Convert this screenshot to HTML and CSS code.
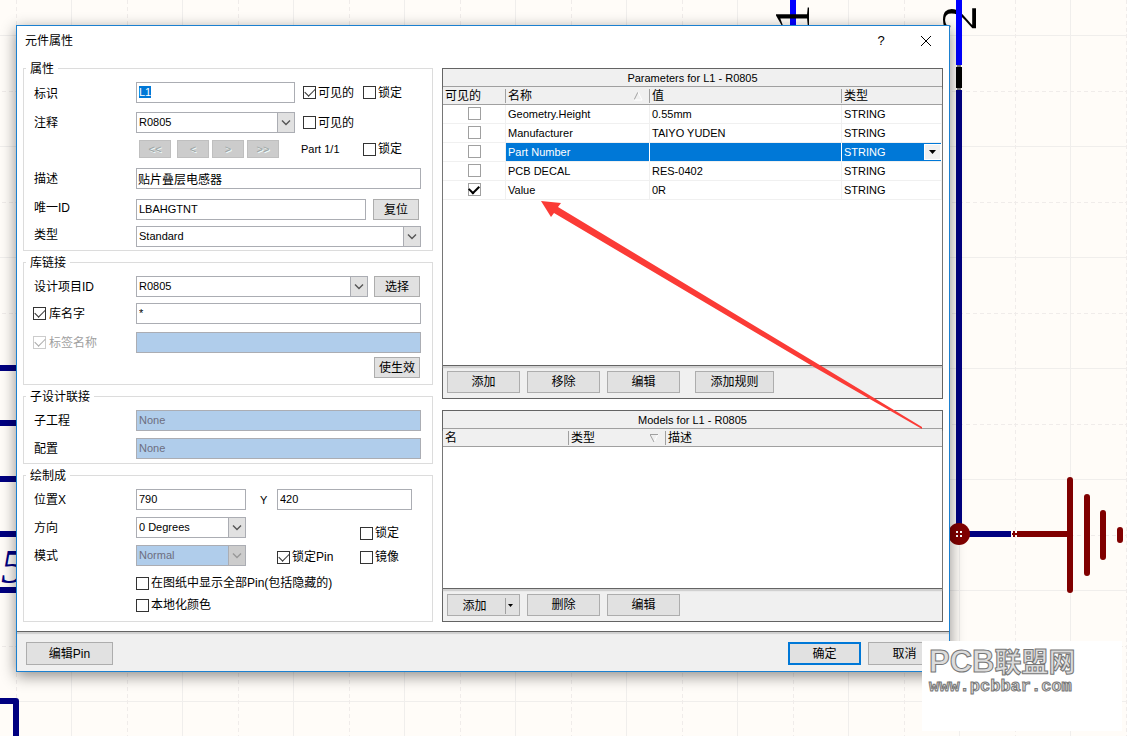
FILE: index.html
```html
<!DOCTYPE html>
<html lang="zh-CN">
<head>
<meta charset="utf-8">
<title>元件属性</title>
<link rel="stylesheet" href="styles.css">
</head>
<body>
<svg class="sheet" aria-hidden="true">
  <defs>
    <pattern id="grid" x="15" y="34" width="111" height="111" patternUnits="userSpaceOnUse">
      <path d="M56.5 0V111M0 1.500H111" stroke="#f0eeec" fill="none"/>
      <path d="M1.500 0V111M0 57.500H111" stroke="#f0ecea" stroke-dasharray="4 3" fill="none"/>
    </pattern>
  </defs>
  <rect width="100%" height="100%" fill="url(#grid)"/>
  <g stroke="#000080" stroke-width="6" fill="none">
    <path d="M0 368H20M0 423H20M0 479H20M0 534H20M0 590H20"/>
    <path d="M0 701H16V740" stroke-linejoin="round"/>
  </g>
  <text class="pin-italic" x="1" y="583">5</text>
  <path d="M793 0V30" stroke="#0000ff" stroke-width="6"/>
  <text class="pin" transform="translate(809 17) rotate(-90)">1</text>
  <text class="pin" transform="translate(976 18) rotate(-90)">2</text>
  <path d="M959 0V65" stroke="#0000ff" stroke-width="6"/>
  <path d="M959 67V88" stroke="#000" stroke-width="6"/>
  <path d="M957 66H961M957 89H961" stroke="#000" stroke-width="1"/>
  <path d="M959 90V534H1011" stroke="#000080" stroke-width="6" fill="none"/>
  <circle cx="959" cy="534" r="11" fill="#800000"/>
  <path d="M956 532H962M956 536H962" stroke="#fff" stroke-width="2" stroke-dasharray="2 2"/>
  <path d="M1017 534H1070M1012 534H1017M1014 531V537" stroke="#800000" stroke-width="2"/>
  <path d="M1017 534H1070" stroke="#800000" stroke-width="6"/>
  <g stroke="#800000" stroke-width="6" stroke-linecap="round">
    <path d="M1070 480V590M1087 497V573M1103 513V557M1120 530V540"/>
  </g>
</svg>

<main class="dialog" role="dialog" aria-labelledby="dlg-title">
  <header class="titlebar">
    <h1 id="dlg-title">元件属性</h1>
    <button class="tb-btn" type="button" aria-label="帮助">?</button>
    <button class="tb-btn" type="button" aria-label="关闭"><svg width="12" height="12" viewBox="0 0 12 12"><path d="M1 1L11 11M11 1L1 11" stroke="#000" fill="none"/></svg></button>
  </header>

  <div class="body">
    <div class="left">
      <fieldset>
        <legend>属性</legend>
        <div class="row g6">
          <label class="lab down" for="des">标识</label>
          <input class="txt w159" id="des" type="text" value="L1">
          <label class="chk c1"><input type="checkbox" checked>可见的</label>
          <label class="chk c2"><input type="checkbox">锁定</label>
        </div>
        <div class="row g9">
          <label class="lab" for="cmt">注释</label>
          <span class="combo w159"><select id="cmt"><option>R0805</option></select><svg viewBox="0 0 10 6"><path d="M1 1L5 5L9 1"/></svg></span>
          <label class="chk c1"><input type="checkbox">可见的</label>
        </div>
        <div class="row g7">
          <span class="lab"></span>
          <span class="nav">
            <button type="button" disabled>&lt;&lt;</button>
            <button type="button" class="prev" disabled>&lt;</button>
            <button type="button" disabled>&gt;</button>
            <button type="button" disabled>&gt;&gt;</button>
          </span>
          <span class="part">Part 1/1</span>
          <label class="chk"><input type="checkbox">锁定</label>
        </div>
        <div class="row g10">
          <label class="lab" for="desc">描述</label>
          <input class="txt cjk grow" id="desc" type="text" value="贴片叠层电感器">
        </div>
        <div class="row g10">
          <label class="lab up" for="uid">唯一ID</label>
          <input class="txt grow" id="uid" type="text" value="LBAHGTNT">
          <button class="btn small reset" type="button">复位</button>
        </div>
        <div class="row g6">
          <label class="lab up" for="type">类型</label>
          <span class="combo grow"><select id="type"><option>Standard</option></select><svg viewBox="0 0 10 6"><path d="M1 1L5 5L9 1"/></svg></span>
        </div>
      </fieldset>

      <fieldset class="library">
        <legend>库链接</legend>
        <div class="row g6">
          <label class="lab" for="item">设计项目ID</label>
          <span class="combo grow"><select id="item"><option>R0805</option></select><svg viewBox="0 0 10 6"><path d="M1 1L5 5L9 1"/></svg></span>
          <button class="btn small" type="button">选择</button>
        </div>
        <div class="row g6">
          <label class="lab chk"><input type="checkbox" checked>库名字</label>
          <input class="txt grow" type="text" value="*" aria-label="库名字">
        </div>
        <div class="row g8">
          <label class="lab chk off"><input type="checkbox" checked disabled>标签名称</label>
          <input class="txt grow" type="text" disabled aria-label="标签名称">
        </div>
        <div class="row g4 end">
          <button class="btn small" type="button">使生效</button>
        </div>
      </fieldset>

      <fieldset class="tight">
        <legend>子设计联接</legend>
        <div class="row g6">
          <label class="lab" for="sub">子工程</label>
          <input class="txt grow" id="sub" type="text" value="None" disabled>
        </div>
        <div class="row g7">
          <label class="lab" for="cfg">配置</label>
          <input class="txt grow" id="cfg" type="text" value="None" disabled>
        </div>
      </fieldset>

      <fieldset class="roomy">
        <legend>绘制成</legend>
        <div class="row g6">
          <label class="lab" for="px">位置X</label>
          <input class="txt w110" id="px" type="text" value="790">
          <label class="ylab" for="py">Y</label>
          <input class="txt w135" id="py" type="text" value="420">
        </div>
        <div class="place">
          <div>
            <div class="row g7">
              <label class="lab" for="dir">方向</label>
              <span class="combo w110"><select id="dir"><option>0 Degrees</option></select><svg viewBox="0 0 10 6"><path d="M1 1L5 5L9 1"/></svg></span>
            </div>
            <div class="row g7">
              <label class="lab" for="mode">模式</label>
              <span class="combo w110"><select id="mode" disabled><option>Normal</option></select><svg viewBox="0 0 10 6"><path d="M1 1L5 5L9 1"/></svg></span>
            </div>
          </div>
          <div class="flags">
            <label class="chk lockall"><input type="checkbox">锁定</label>
            <label class="chk"><input type="checkbox" checked>锁定Pin</label>
            <label class="chk"><input type="checkbox">镜像</label>
          </div>
        </div>
        <div class="row g9"><span class="lab"></span><label class="chk"><input type="checkbox">在图纸中显示全部Pin(包括隐藏的)</label></div>
        <div class="row g6"><span class="lab"></span><label class="chk"><input type="checkbox">本地化颜色</label></div>
      </fieldset>
    </div>

    <div class="right">
      <section class="panel">
        <h2>Parameters for L1 - R0805</h2>
        <div class="list params">
          <table>
            <colgroup><col class="p1"><col class="p2"><col class="p3"><col></colgroup>
            <thead><tr><th>可见的</th><th>名称<svg class="sort" viewBox="0 0 9 9"><path d="M0 8L4 0" stroke="#a0a0a0"/><path d="M4 0L8 8H0" stroke="#fff"/></svg></th><th>值</th><th>类型</th></tr></thead>
            <tbody>
              <tr><td><input type="checkbox" aria-label="Geometry.Height"></td><td>Geometry.Height</td><td>0.55mm</td><td>STRING</td></tr>
              <tr><td><input type="checkbox" aria-label="Manufacturer"></td><td>Manufacturer</td><td>TAIYO YUDEN</td><td>STRING</td></tr>
              <tr class="sel"><td><input type="checkbox" aria-label="Part Number"></td><td>Part Number</td><td></td><td>STRING<button class="drop" type="button" aria-label="类型"><svg viewBox="0 0 7 4"><path d="M0 0H7L3.500 4Z"/></svg></button></td></tr>
              <tr><td><input type="checkbox" aria-label="PCB DECAL"></td><td>PCB DECAL</td><td>RES-0402</td><td>STRING</td></tr>
              <tr><td><input type="checkbox" aria-label="Value" checked></td><td>Value</td><td>0R</td><td>STRING</td></tr>
            </tbody>
          </table>
        </div>
        <div class="tools">
          <button class="btn" type="button">添加</button>
          <button class="btn" type="button">移除</button>
          <button class="btn" type="button">编辑</button>
          <button class="btn rule" type="button">添加规则</button>
        </div>
      </section>

      <section class="panel">
        <h2>Models for L1 - R0805</h2>
        <div class="list models">
          <table>
            <colgroup><col class="m1"><col class="m2"><col></colgroup>
            <thead><tr><th>名</th><th>类型<svg class="sort" viewBox="0 0 9 9"><path d="M8 0L4 8" stroke="#fff"/><path d="M8 .5H0L4 8" stroke="#a0a0a0"/></svg></th><th>描述</th></tr></thead>
          </table>
        </div>
        <div class="tools">
          <button class="btn split" type="button"><span>添加</span><svg viewBox="0 0 5 3"><path d="M0 0H5L2.500 3Z"/></svg></button>
          <button class="btn" type="button">删除</button>
          <button class="btn" type="button">编辑</button>
        </div>
      </section>
    </div>
  </div>

  <footer class="foot">
    <button class="btn wide" type="button">编辑Pin</button>
    <button class="btn ok" type="button">确定</button>
    <button class="btn cancel" type="button">取消</button>
  </footer>
</main>

<svg class="pointer" aria-hidden="true"><path d="M541 201L561 203L558 207L818 364L922 427V429L814 367L554 213L551 217Z" fill="#fb3b36"/></svg>

<aside class="mark">
  <p class="brand">PCB<span>联盟网</span></p>
  <p class="site">www.pcbbar.com</p>
</aside>
<script src="main.js"></script>
</body>
</html>
```

FILE: main.js
```js
// The designator is ready to be overwritten when the dialog opens.
const designator = document.getElementById('des');
designator.focus();
designator.select();
```

FILE: styles.css
```css
* { box-sizing: border-box; }

body {
  margin: 0;
  min-height: 100vh;
  position: relative;
  overflow: hidden;
  background: #fffcf8;
  color: #000;
  font: 12px/16px "Liberation Sans", "Noto Sans CJK SC", sans-serif;
}

input, select, button { font: inherit; color: inherit; margin: 0; border-radius: 0; outline: none; }

.sheet, .pointer { position: absolute; inset: 0; width: 100%; height: 100%; }
.pointer { pointer-events: none; }
.pin { font: 50px "Liberation Serif", serif; text-anchor: middle; }
.pin-italic { font: italic 48px "Liberation Serif", serif; fill: #000080; }

.dialog {
  position: absolute;
  left: 16px;
  right: 177px;
  top: 25px;
  background: #fff;
  border: 1px solid #1b80d0;
  box-shadow: 0 4px 14px rgba(0, 0, 0, .45);
}

.titlebar { display: flex; align-items: center; height: 34px; padding: 0 8px 4px; }
.titlebar h1 { flex: 1; margin: 0; font-size: 12px; font-weight: 400; }
.tb-btn { width: 30px; height: 24px; margin-left: 15px; padding: 0; border: 0; background: none; font-size: 13px; display: flex; align-items: center; justify-content: center; }

.body { display: flex; gap: 9px; padding: 0 6px 9px; }
.left { flex: 0 0 410px; display: flex; flex-direction: column; gap: 3px; }
.right { flex: 1; min-width: 0; display: flex; flex-direction: column; gap: 11px; padding-top: 8px; }

fieldset { margin: 0; min-width: 0; border: 1px solid #dcdcdc; padding: 0 11px 3px 2px; }
fieldset.library { padding-bottom: 6px; }
fieldset.tight { padding-bottom: 4px; }
fieldset.roomy { padding-bottom: 8px; }
legend { padding: 0 4px; height: 16px; line-height: 18px; }

.row { display: flex; align-items: center; padding-left: 8px; }
.g4 { margin-top: 4px; }
.g6 { margin-top: 6px; }
.g7 { margin-top: 7px; }
.g8 { margin-top: 8px; }
.g9 { margin-top: 9px; }
.g10 { margin-top: 10px; }
.end { justify-content: flex-end; padding-right: 1px; }
.lab { flex: 0 0 102px; }
.up { padding-bottom: 4px; }
.down { padding-top: 3px; }
.grow { flex: 1; min-width: 0; }
.w159 { width: 159px; }
.w110 { width: 110px; }
.w135 { width: 135px; }

.txt { height: 21px; border: 1px solid #abadb3; background: #fff; padding: 0 2px 2px; font-size: 11px; }
.txt.cjk { padding: 0 1px; font-size: 12px; }
.txt:disabled, select:disabled { background: #b0cdeb; color: #6d6d80; border-color: #abadb3; opacity: 1; }
.txt::selection { background: #0078d7; color: #fff; }

.combo { position: relative; display: flex; height: 21px; }
.combo select { appearance: none; width: 100%; height: 21px; padding: 0 20px 2px 2px; border: 1px solid #abadb3; background: #fff; font-size: 11px; }
.combo select:disabled { background: #b0cdeb; }
.combo svg { position: absolute; right: 0; top: 0; width: 18px; height: 21px; padding: 6px 3px; border: 1px solid #abadb3; background: #e1e1e1; pointer-events: none; }
.combo path { fill: none; stroke: #555; stroke-width: 1.400; }
.combo select:disabled + svg { background: #ccc; }
.combo select:disabled + svg path { stroke: #999; }

.chk { display: flex; align-items: center; gap: 2px; white-space: nowrap; }
.c1 { width: 60px; margin-left: 8px; }
input[type="checkbox"] { appearance: none; flex: none; display: grid; place-items: center; width: 13px; height: 13px; border: 1px solid #333; background: #fff; }
input[type="checkbox"]:checked::before { content: ""; width: 9px; height: 5px; margin-top: -3px; border: solid #333; border-width: 0 0 1px 1px; transform: rotate(-45deg); }
.lab.chk { margin-left: -1px; flex-basis: 103px; gap: 3px; }
.off { color: #a0a0a0; }
.off input[type="checkbox"] { border-color: #ccc; }
.off input[type="checkbox"]:checked::before { border-color: #aaa; }

.nav { display: flex; gap: 3px; padding-left: 3px; width: 165px; }
.nav button { width: 32px; height: 18px; padding: 0; border: 1px solid #bfbfbf; background: #ccc; color: #9aa3a3; font-size: 11px; line-height: 14px; text-shadow: 1px 1px #f0ffff; }
.nav .prev { margin-left: 3px; }
.part { width: 62px; font-size: 11px; }

.btn { width: 73px; height: 22px; padding: 1px 0 0; border: 1px solid #adadad; background: #e1e1e1; text-align: center; line-height: 19px; white-space: nowrap; }
.btn.small { width: 46px; height: 21px; margin: 0 1px 0 6px; }
.btn.reset { margin: 0 2px 0 7px; }
.end .btn.small { margin-right: 0; }

.ylab { width: 31px; padding-left: 14px; font-size: 11px; }
.place { display: flex; }
.flags { display: grid; grid-template-columns: 83px 1fr; gap: 8px 0; align-content: start; padding: 15px 0 0 31px; }
.lockall { grid-column: 2; }

.panel { border: 1px solid #646464; background: #f0f0f0; }
.panel h2 { margin: 0; height: 18px; font-size: 11px; font-weight: 400; line-height: 18px; text-align: center; border-bottom: 1px solid #a0a0a0; }
.list { background: #fff; border-bottom: 1px solid #646464; box-shadow: 0 2px 1px #d0d0d0; }
.params { min-height: 279px; }
.models { min-height: 160px; }
table { width: 100%; table-layout: fixed; border-collapse: separate; border-spacing: 0; }
.p1 { width: 63px; }
.p2 { width: 144px; }
.p3 { width: 192px; }
.m1 { width: 126px; }
.m2 { width: 97px; }
th { position: relative; height: 18px; padding: 1px 2px 0; font-weight: 400; text-align: left; line-height: 16px; background: linear-gradient(#a0a0a0, #a0a0a0) right 2px / 1px 14px no-repeat #f0f0f0; border-bottom: 1px solid #a0a0a0; }
th:last-child { background: #f0f0f0; }
.sort { position: absolute; right: 7px; top: 5px; width: 9px; height: 9px; fill: none; }
td { position: relative; height: 19px; padding: 0 2px; vertical-align: top; font-size: 11px; line-height: 18px; border-right: 1px solid #f0f0f0; border-bottom: 1px solid #f0f0f0; }
td input[type="checkbox"] { margin: 2px auto 0; border-color: #a0a0a0; }
td input[type="checkbox"]:checked::before { border-color: #000; border-width: 0 0 2px 2px; width: 8px; }
.sel td:not(:first-child) { background: #0078d7; color: #fff; border-right-color: #fff; }
.drop { position: absolute; right: 0; top: 1px; width: 17px; height: 16px; padding: 0; border: 1px solid #fff; background: #f0f0f0; display: grid; place-items: center; }
.drop svg { width: 7px; height: 4px; }
.tools { display: flex; gap: 7px; padding: 5px 4px; }
.rule { width: 79px; margin-left: 8px; }
.split { display: flex; align-items: center; }
.split span { width: 58px; padding-right: 4px; border-right: 1px solid #a0a0a0; line-height: 16px; }
.split svg { width: 5px; height: 3px; margin-left: 2px; }

.foot { display: flex; gap: 7px; height: 40px; padding: 10px 8px 0 9px; background: #f0f0f0; border-top: 1px solid #646464; box-shadow: inset 0 2px 1px #d0d0d0; }
.foot .btn { height: 23px; }
.foot .wide { width: 87px; margin-right: auto; }
.foot .ok { border: 2px solid #0078d7; line-height: 18px; }

.mark { position: absolute; left: 922px; top: 641px; width: 200px; height: 90px; padding: 3px 7px; background: #fff; color: #dcdcdc; -webkit-text-stroke: 1px #777; }
.mark p { margin: 0; white-space: nowrap; }
.brand { font: bold 31px/34px "Liberation Sans", sans-serif; }
.brand span { font: bold 27px/34px "Noto Sans CJK SC", sans-serif; }
.site { font: bold 17px/16px "Liberation Mono", monospace; }
```
